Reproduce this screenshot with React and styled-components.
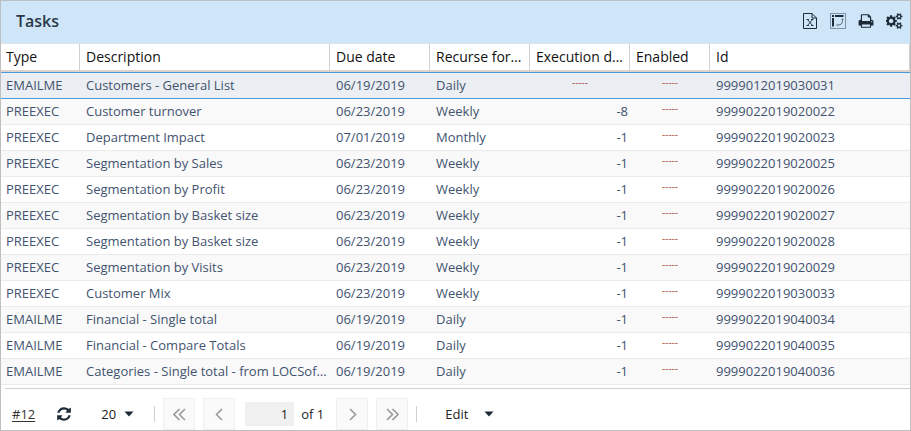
import React from "react";
import styled, { createGlobalStyle, css } from "styled-components";

const GlobalStyle = createGlobalStyle`
  *, *::before, *::after { box-sizing: border-box; }
  html, body, #root { height: 100%; }
  body {
    margin: 0;
    background: #fff;
    font-family: "Open Sans", "Noto Sans", sans-serif;
    font-size: 13px;
    color: #222;
  }
  button, input, select { font: inherit; color: inherit; }
`;

const Panel = styled.main`
  display: flex;
  flex-direction: column;
  min-height: 100%;
  border: 1px solid #bfbfbf;
  background: #fff;
`;

const TitleBar = styled.header`
  display: flex;
  align-items: center;
  justify-content: space-between;
  height: 42px;
  padding: 0 7px 2px 15px;
  background: #cfe6f8;
`;

const Title = styled.h1`
  margin: 0;
  font-size: 16px;
  line-height: 20px;
  font-weight: 600;
  color: #2b3a4a;
`;

const Tools = styled.div`
  display: flex;
  gap: 10px;
`;

const IconButton = styled.button`
  display: flex;
  align-items: center;
  justify-content: center;
  width: 18px;
  height: 18px;
  padding: 0;
  border: 0;
  background: none;
  color: #1d2b38;
`;

const Grid = styled.table`
  width: 100%;
  table-layout: fixed;
  border-collapse: separate;
  border-spacing: 0;
`;

const Col = styled.col`
  width: ${(p) => p.$width || "auto"};
`;

const ellipsis = css`
  overflow: hidden;
  white-space: nowrap;
  text-overflow: ellipsis;
`;

const HeadCell = styled.th`
  ${ellipsis}
  height: 29px;
  padding: 0 6px;
  border-top: 1px solid #dbe3ea;
  border-right: 1px solid #d0d0d0;
  border-bottom: 2px solid #ddd2cc;
  font-size: 14px;
  line-height: 20px;
  font-weight: 400;
  text-align: left;
  color: #111;
`;

const Cell = styled.td`
  ${ellipsis}
  height: 26px;
  padding: 0 2px 2px 6px;
  border-bottom: 1px solid #ebebeb;
  line-height: 20px;
  text-align: ${(p) => p.$align || "left"};
  color: #42536f;
  &:first-child { padding-left: 5px; }
`;

const HeadRow = styled.tr`
  th:first-child { padding-left: 5px; }
`;

const Row = styled.tr`
  &:nth-child(even) { background: #f9f9f9; }
  ${(p) =>
    p.$selected &&
    css`
      background: #ebeef2;
      ${Cell} {
        height: 27px;
        border-top: 1px solid #4a9ade;
        border-bottom-color: #4a9ade;
      }
    `}
`;

const Dashes = styled.span`
  display: block;
  padding: 0 4px 6px 0;
  font-size: 10px;
  line-height: 14px;
  text-align: center;
  color: #b0524c;
`;

const Footer = styled.footer`
  display: flex;
  flex: 1;
  align-items: flex-start;
  margin: 3px 0 0 4px;
  padding: 9px 7px 0;
  border-top: 1px solid #cfcfcf;
`;

const Group = styled.div`
  display: flex;
  align-items: center;
  height: 32px;
  gap: ${(p) => p.$gap}px;
  padding-right: ${(p) => p.$end || 0}px;
`;

const CountLink = styled.a`
  color: #333;
  text-underline-offset: 2px;
`;

const SizeSelect = styled.label`
  display: flex;
  align-items: center;
  gap: 8px;
  margin-left: 8px;
  select {
    width: 15px;
    padding: 0;
    border: 0;
    background: none;
    appearance: none;
    outline: 0;
  }
`;

const Divider = styled.span`
  width: 1px;
  height: 16px;
  background: #cfcfcf;
`;

const PageButton = styled.button`
  display: flex;
  align-items: center;
  justify-content: center;
  width: 32px;
  height: 32px;
  padding: 0;
  border: 1px solid #f0f0f0;
  background: #fafafa;
  color: #9a9a9a;
`;

const PageLabel = styled.label`
  display: flex;
  align-items: center;
  gap: 7px;
  padding: 0 4px 0 2px;
`;

const PageInput = styled.input`
  width: 49px;
  height: 24px;
  padding: 0 6px;
  border: 0;
  background: #f0f0f0;
  text-align: right;
`;

const MenuButton = styled.button`
  display: flex;
  align-items: center;
  gap: 16px;
  padding: 0;
  border: 0;
  background: none;
`;

const columns = [
  { label: "Type", width: "79px" },
  { label: "Description", width: "250px" },
  { label: "Due date", width: "100px" },
  { label: "Recurse format", width: "100px" },
  { label: "Execution delay", width: "100px" },
  { label: "Enabled", width: "80px" },
  { label: "Id" },
];

const tasks = [
  ["EMAILME", "Customers - General List", "06/19/2019", "Daily", null, "9999012019030031"],
  ["PREEXEC", "Customer turnover", "06/23/2019", "Weekly", -8, "9999022019020022"],
  ["PREEXEC", "Department Impact", "07/01/2019", "Monthly", -1, "9999022019020023"],
  ["PREEXEC", "Segmentation by Sales", "06/23/2019", "Weekly", -1, "9999022019020025"],
  ["PREEXEC", "Segmentation by Profit", "06/23/2019", "Weekly", -1, "9999022019020026"],
  ["PREEXEC", "Segmentation by Basket size", "06/23/2019", "Weekly", -1, "9999022019020027"],
  ["PREEXEC", "Segmentation by Basket size", "06/23/2019", "Weekly", -1, "9999022019020028"],
  ["PREEXEC", "Segmentation by Visits", "06/23/2019", "Weekly", -1, "9999022019020029"],
  ["PREEXEC", "Customer Mix", "06/23/2019", "Weekly", -1, "9999022019030033"],
  ["EMAILME", "Financial - Single total", "06/19/2019", "Daily", -1, "9999022019040034"],
  ["EMAILME", "Financial - Compare Totals", "06/19/2019", "Daily", -1, "9999022019040035"],
  ["EMAILME", "Categories - Single total - from LOCSoftware", "06/19/2019", "Daily", -1, "9999022019040036"],
];

const ExcelIcon = () => (
  <svg width="14" height="16" viewBox="0 0 14 16" fill="none" stroke="currentColor" aria-hidden="true">
    <path d="M.5 .5h8.5l4.5 4.5v10.500h-13zM9 .5v4.500h4.500" />
    <path d="M4.500 6.500l5 6M9.500 6.500l-5 6M3.500 6.500h2.500M8 6.500h2.500M3.500 12.500h2.500M8 12.500h2.500" strokeWidth=".9" />
  </svg>
);

const PivotIcon = () => (
  <svg width="16" height="16" viewBox="0 0 16 16" fill="none" stroke="currentColor" aria-hidden="true">
    <rect x=".5" y=".5" width="15" height="15" stroke="#7f95a8" />
    <path d="M2 3h2M5 3h8.500" strokeWidth="2" />
    <path d="M3 5v8.500" strokeWidth="2" />
    <path d="M12.500 5.500v2c0 3-1.500 4.500-4.500 4.500h-1.500" stroke="#526879" />
    <path d="M11 7l1.500-1.500L14 7M8 10.500L6.500 12 8 13.500" stroke="#8fa3b4" strokeWidth=".7" />
  </svg>
);

const PrintIcon = () => (
  <svg width="16" height="16" viewBox="0 0 1792 1792" fill="currentColor" aria-hidden="true">
    <path d="M448 1536h896v-256h-896v256zm0-640h896v-384h-160q-40 0-68-28t-28-68v-160h-640v640zm1152 64q0-26-19-45t-45-19-45 19-19 45 19 45 45 19 45-19 19-45zm128 0v416q0 13-9.5 22.500t-22.500 9.500h-224v160q0 40-28 68t-68 28h-960q-40 0-68-28t-28-68v-160h-224q-13 0-22.500-9.500t-9.500-22.500v-416q0-79 56.500-135.500t135.500-56.500h64v-544q0-40 28-68t68-28h672q40 0 88 20t76 48l152 152q28 28 48 76t20 88v256h64q79 0 135.500 56.500t56.500 135.500z" />
  </svg>
);

const CogsIcon = () => (
  <svg width="17" height="16" viewBox="0 0 1920 1792" fill="currentColor" aria-hidden="true">
    <path d="M832 896q0-106-75-181t-181-75-181 75-75 181 75 181 181 75 181-75 75-181zm768 512q0-52-38-90t-90-38-90 38-38 90q0 53 37.5 90.500t90.500 37.500 90.500-37.500 37.500-90.500zm0-1024q0-52-38-90t-90-38-90 38-38 90q0 53 37.500 90.500t90.500 37.500 90.500-37.500 37.500-90.500zm-384 421v185q0 10-7 19.500t-16 10.500l-155 24q-11 35-32 76 34 48 90 115 7 11 7 20 0 12-7 19-23 30-82.500 89.500t-78.500 59.500q-11 0-21-7l-115-90q-37 19-77 31-11 108-23 155-7 24-30 24h-186q-11 0-20-7.500t-10-17.500l-23-153q-34-10-75-31l-118 89q-7 7-20 7-11 0-21-8-144-133-144-160 0-9 7-19 10-14 41-53t47-61q-23-44-35-82l-152-24q-10-1-17-9.500t-7-19.500v-185q0-10 7-19.500t16-10.500l155-24q11-35 32-76-34-48-90-115-7-11-7-20 0-12 7-20 22-30 82-89t79-59q11 0 21 7l115 90q34-18 77-32 11-108 23-154 7-24 30-24h186q11 0 20 7.500t10 17.500l23 153q34 10 75 31l118-89q8-7 20-7 11 0 21 8 144 133 144 160 0 8-7 19-12 16-42 54t-45 60q23 48 34 82l152 23q10 2 17 10.500t7 19.500zm640 533v140q0 16-149 31-12 27-30 52 51 113 51 138 0 4-4 7-122 71-124 71-8 0-46-47t-52-68q-20 2-30 2t-30-2q-14 21-52 68t-46 47q-2 0-124-71-4-3-4-7 0-25 51-138-18-25-30-52-149-15-149-31v-140q0-16 149-31 13-29 30-52-51-113-51-138 0-4 4-7 4-2 35-20t59-34 30-16q8 0 46 46.500t52 67.500q20-2 30-2t30 2q51-71 92-112l6-2q4 0 124 70 4 3 4 7 0 25-51 138 17 23 30 52 149 15 149 31zm0-1024v140q0 16-149 31-12 27-30 52 51 113 51 138 0 4-4 7-122 71-124 71-8 0-46-47t-52-68q-20 2-30 2t-30-2q-14 21-52 68t-46 47q-2 0-124-71-4-3-4-7 0-25 51-138-18-25-30-52-149-15-149-31v-140q0-16 149-31 13-29 30-52-51-113-51-138 0-4 4-7 4-2 35-20t59-34 30-16q8 0 46 46.500t52 67.500q20-2 30-2t30 2q51-71 92-112l6-2q4 0 124 70 4 3 4 7 0 25-51 138 17 23 30 52 149 15 149 31z" />
  </svg>
);

const RefreshIcon = () => (
  <svg width="16" height="16" viewBox="0 0 1792 1792" fill="currentColor" aria-hidden="true">
    <path d="M1639 1056q0 5-1 7-64 268-268 434.500t-478 166.500q-146 0-282.500-55t-243.500-157l-129 129q-19 19-45 19t-45-19-19-45v-448q0-26 19-45t45-19h448q26 0 45 19t19 45-19 45l-137 137q71 66 161 102t187 36q134 0 250-65t186-179q11-17 53-117 8-23 30-23h192q13 0 22.500 9.500t9.500 22.500zm25-800v448q0 26-19 45t-45 19h-448q-26 0-45-19t-19-45 19-45l138-138q-148-137-349-137-134 0-250 65t-186 179q-11 17-53 117-8 23-30 23h-199q-13 0-22.500-9.500t-9.500-22.500v-7q65-268 270-434.500t480-166.500q146 0 284 55.500t245 156.500l130-129q19-19 45-19t45 19 19 45z" />
  </svg>
);

const CaretIcon = () => (
  <svg width="10" height="6" viewBox="0 0 10 6" fill="#1d2b38" aria-hidden="true">
    <path d="M.5 .5h9L5 5.500z" />
  </svg>
);

const chevrons = {
  first: "M6.500 1L1 6.500l5.500 5.500M12 1L6.500 6.500l5.500 5.500",
  previous: "M9 1L3.500 6.500l5.500 5.500",
  next: "M4 1l5.500 5.500L4 12",
  last: "M1 1l5.500 5.500L1 12M6.500 1l5.500 5.500L6.500 12",
};

const Pager = ({ to }) => (
  <PageButton type="button" aria-label={`${to} page`}>
    <svg width="13" height="13" viewBox="0 0 13 13" fill="none" stroke="currentColor" strokeWidth="1.6" aria-hidden="true">
      <path d={chevrons[to]} />
    </svg>
  </PageButton>
);

function TaskRow({ task, selected }) {
  const [type, description, due, recurse, delay, id] = task;
  return (
    <Row $selected={selected} aria-selected={selected}>
      <Cell>{type}</Cell>
      <Cell>{description}</Cell>
      <Cell>{due}</Cell>
      <Cell>{recurse}</Cell>
      <Cell $align="right">{delay === null ? <Dashes>-----</Dashes> : delay}</Cell>
      <Cell><Dashes>-----</Dashes></Cell>
      <Cell>{id}</Cell>
    </Row>
  );
}

export default function App() {
  return (
    <>
      <GlobalStyle />
      <Panel>
        <TitleBar>
          <Title>Tasks</Title>
          <Tools>
            <IconButton type="button" aria-label="Export to Excel"><ExcelIcon /></IconButton>
            <IconButton type="button" aria-label="Pivot"><PivotIcon /></IconButton>
            <IconButton type="button" aria-label="Print"><PrintIcon /></IconButton>
            <IconButton type="button" aria-label="Settings"><CogsIcon /></IconButton>
          </Tools>
        </TitleBar>
        <Grid>
          <colgroup>
            {columns.map((c) => <Col key={c.label} $width={c.width} />)}
          </colgroup>
          <thead>
            <HeadRow>
              {columns.map((c) => <HeadCell key={c.label} scope="col">{c.label}</HeadCell>)}
            </HeadRow>
          </thead>
          <tbody>
            {tasks.map((task, i) => <TaskRow key={task[5]} task={task} selected={i === 0} />)}
          </tbody>
        </Grid>
        <Footer>
          <Group $gap={20} $end={8}>
            <CountLink href="#count">#12</CountLink>
            <IconButton type="button" aria-label="Refresh"><RefreshIcon /></IconButton>
            <SizeSelect>
              <select aria-label="Rows per page" defaultValue="20">
                <option>20</option>
                <option>50</option>
              </select>
              <CaretIcon />
            </SizeSelect>
            <Divider />
          </Group>
          <Group $gap={8} $end={28}>
            <Pager to="first" />
            <Pager to="previous" />
            <PageLabel>
              <PageInput aria-label="Page" defaultValue="1" />
              of 1
            </PageLabel>
            <Pager to="next" />
            <Pager to="last" />
            <Divider />
          </Group>
          <Group $gap={0}>
            <MenuButton type="button" aria-haspopup="menu">
              Edit
              <CaretIcon />
            </MenuButton>
          </Group>
        </Footer>
      </Panel>
    </>
  );
}
